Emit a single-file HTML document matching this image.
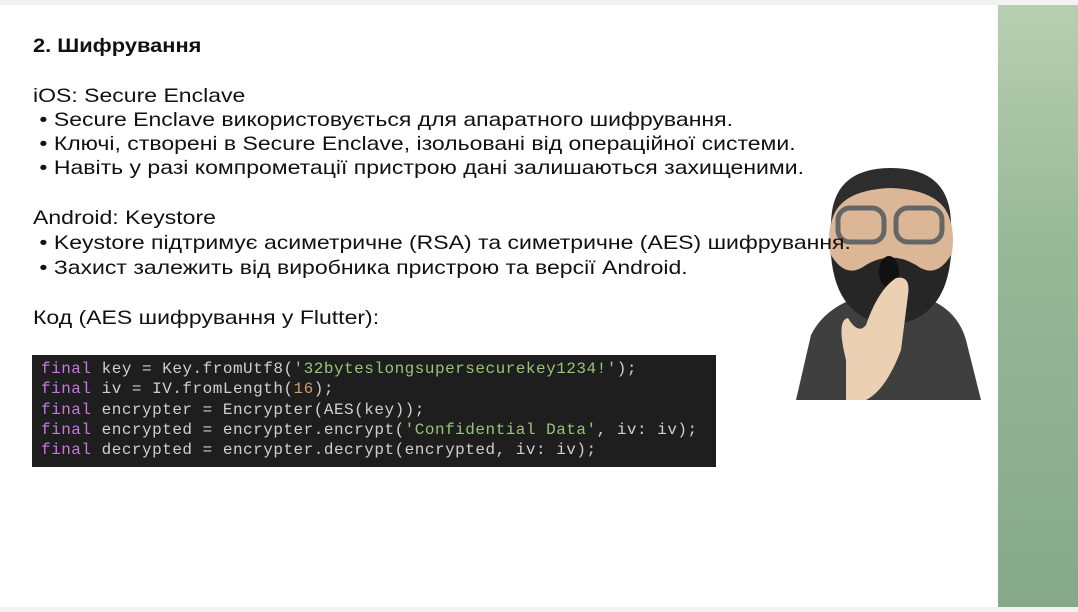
<!DOCTYPE html>
<html><head><meta charset="utf-8"><style>
html,body{margin:0;padding:0;}
body{width:1078px;height:612px;background:#f2f2f2;position:relative;overflow:hidden;font-family:"Liberation Sans","DejaVu Sans",sans-serif;}
.slide{position:absolute;left:0;top:5px;width:998px;height:602px;background:#fff;}
.green{position:absolute;left:998px;top:5px;width:80px;height:602px;background:linear-gradient(180deg,#b7cfb0 0%,#98b897 40%,#85a98a 100%);}
.t{position:absolute;z-index:2;left:33px;font-size:19.5px;color:#111;white-space:nowrap;line-height:24px;transform:scaleX(1.18);transform-origin:0 0;}
.code{position:absolute;left:32px;top:355px;width:684px;height:112px;background:#1e1e1e;}
.code pre{margin:0;position:absolute;left:9px;top:4px;font-family:"Liberation Mono","DejaVu Sans Mono",monospace;font-size:16px;line-height:20.3px;color:#cfcfcf;letter-spacing:0.5px;}
.k{color:#c678dd}.s{color:#98c379}.n{color:#d19a66}
</style></head><body>
<div class="slide"></div>
<div class="green"></div>
<svg style="position:absolute;left:786px;top:160px;z-index:1" width="204" height="240" viewBox="0 0 204 240">
<path d="M10 240 L25 175 Q40 145 80 135 L130 135 Q170 145 180 180 L195 240 Z" fill="#3f3f3f"/>
<path d="M85 135 L100 175 L118 135 Z" fill="#d9b89a"/>
<ellipse cx="105" cy="80" rx="62" ry="70" fill="#dcb797"/>
<path d="M45 65 Q45 8 105 8 Q165 8 165 65 Q160 30 105 28 Q50 30 45 65 Z" fill="#2d2d2d"/>
<path d="M45 95 Q50 160 105 165 Q160 160 165 95 Q150 120 130 105 Q105 90 80 105 Q60 120 45 95 Z" fill="#262626"/>
<ellipse cx="103" cy="112" rx="10" ry="16" fill="#111"/>
<rect x="52" y="48" width="46" height="34" rx="12" fill="none" stroke="#666" stroke-width="5"/>
<rect x="110" y="48" width="46" height="34" rx="12" fill="none" stroke="#666" stroke-width="5"/>
<path d="M60 200 Q50 160 62 158 Q72 175 80 165 Q92 130 110 118 Q125 115 122 135 L115 190 Q100 230 80 240 L60 240 Z" fill="#ecd0b4"/>
</svg>
<div class="t" style="top:34px;font-weight:bold;transform:scaleX(1.12)">2. Шифрування</div>
<div class="t" style="top:84px">iOS: Secure Enclave</div>
<div class="t" style="top:108px">&nbsp;• Secure Enclave використовується для апаратного шифрування.</div>
<div class="t" style="top:132px">&nbsp;• Ключі, створені в Secure Enclave, ізольовані від операційної системи.</div>
<div class="t" style="top:156px">&nbsp;• Навіть у разі компрометації пристрою дані залишаються захищеними.</div>
<div class="t" style="top:206px">Android: Keystore</div>
<div class="t" style="top:231px">&nbsp;• Keystore підтримує асиметричне (RSA) та симетричне (AES) шифрування.</div>
<div class="t" style="top:256px">&nbsp;• Захист залежить від виробника пристрою та версії Android.</div>
<div class="t" style="top:306px">Код (AES шифрування у Flutter):</div>
<div class="code"><pre><span class="k">final</span> key = Key.fromUtf8(<span class="s">'32byteslongsupersecurekey1234!'</span>);
<span class="k">final</span> iv = IV.fromLength(<span class="n">16</span>);
<span class="k">final</span> encrypter = Encrypter(AES(key));
<span class="k">final</span> encrypted = encrypter.encrypt(<span class="s">'Confidential Data'</span>, iv: iv);
<span class="k">final</span> decrypted = encrypter.decrypt(encrypted, iv: iv);</pre></div>
</body></html>
